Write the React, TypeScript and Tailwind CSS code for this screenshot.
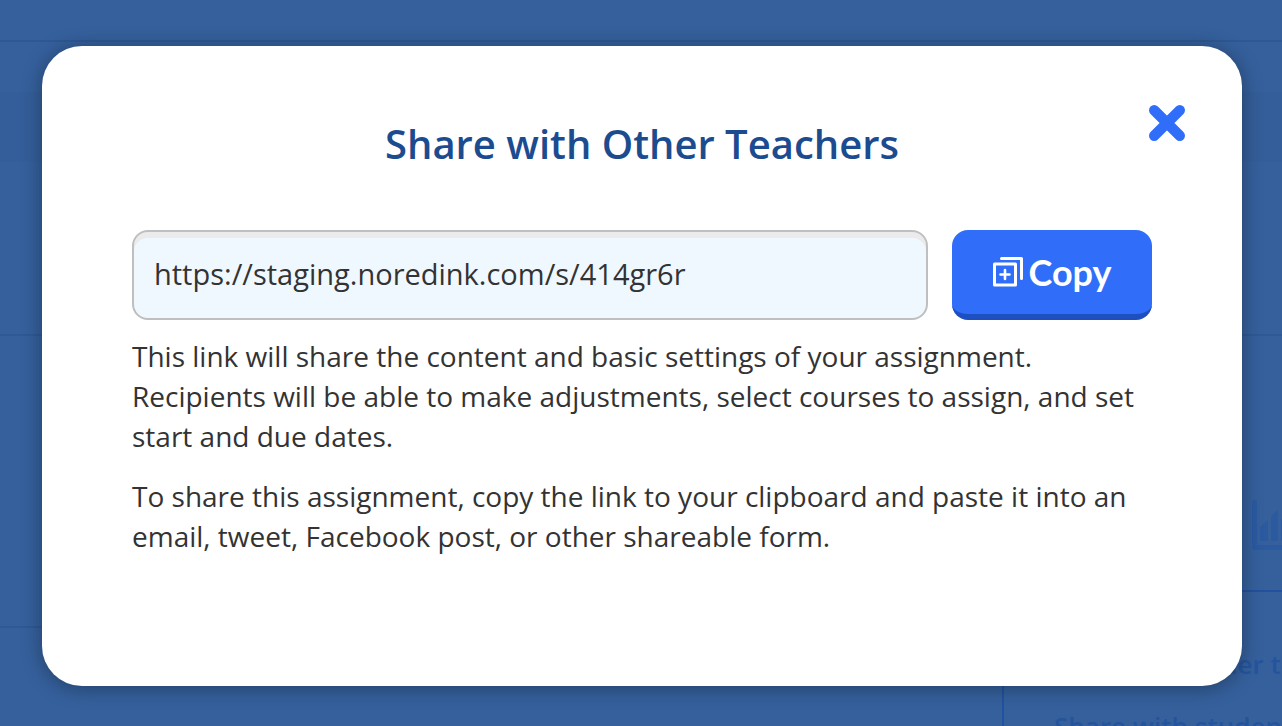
import React from "react";

function CopyIcon() {
  return (
    <svg className="size-8 shrink-0" viewBox="0 0 32 32" fill="none" stroke="currentColor" aria-hidden="true">
      <rect x="2.5" y="8" width="21" height="21" strokeWidth="3" strokeLinejoin="round" />
      <path d="M9.5 2.5H29.5V22.5" strokeWidth="3" strokeLinecap="round" strokeLinejoin="round" />
      <path d="M13 14V23M8.5 18.5H17.5" strokeWidth="2.6" strokeLinecap="round" />
    </svg>
  );
}

function CloseIcon() {
  return (
    <svg className="size-9" viewBox="0 0 36 36" fill="none" stroke="currentColor" aria-hidden="true">
      <path d="M5.2 5.2L30.8 30.8M30.8 5.2L5.2 30.8" strokeWidth="10.4" strokeLinecap="round" />
    </svg>
  );
}

function ChartIcon() {
  return (
    <svg className="h-[50px] w-14" viewBox="0 0 56 50" fill="currentColor" aria-hidden="true">
      <path d="M0 2Q0 0 2 0H3Q5 0 5 2V45H56V50H3Q0 50 0 47Z" />
      <path d="M8 27L16 20V41H8ZM19 16L26 10V41H19ZM29 20L36 14V41H29ZM39 11L46 4V41H39Z" />
    </svg>
  );
}

function AssignmentsPage() {
  return (
    <div className="absolute inset-0 overflow-hidden bg-[#35609c] text-[#24549d]" aria-hidden="true">
      <div className="h-[42px] border-b-2 border-[#2d5894]" />
      <div className="h-[294px] border-b-2 border-[#2f5994] pt-[50px]">
        <div className="h-[70px] bg-[#345e99]" />
      </div>
      <div className="flex h-[292px] justify-end border-b-2 border-[#2f5994] pt-[164px]">
        <div className="-mr-[26px] text-[#2b5aa1]">
          <ChartIcon />
        </div>
      </div>
      <div className="absolute -right-20 top-[590px] flex w-[360px] flex-col gap-[22px] border-2 border-[#2251a0] bg-[#35609c] py-[52px] pl-[50px] text-[26px] leading-10 font-semibold whitespace-nowrap">
        <span>Share with other teachers</span>
        <span>Share with students</span>
      </div>
    </div>
  );
}

export default function App() {
  return (
    <div className="relative min-h-screen overflow-hidden font-['Open_Sans','Noto_Sans',sans-serif]">
      <AssignmentsPage />
      <main className="relative px-10 pt-[46px] pb-10 pl-[42px]">
        <section
          role="dialog"
          aria-modal="true"
          aria-labelledby="share-title"
          className="relative rounded-[40px] bg-white px-[90px] pt-[70px] pb-[130px] text-[#333333] shadow-[0_2px_20px_rgba(0,0,0,0.35)]"
        >
          <button type="button" aria-label="Close" className="absolute top-[59px] right-[57px] text-[#306ef9]">
            <CloseIcon />
          </button>
          <h1 id="share-title" className="text-center text-[40px] leading-14 font-semibold text-[#1c4c8f]">
            Share with Other Teachers
          </h1>
          <div className="mt-[58px] flex gap-6">
            <input
              aria-label="Share link"
              readOnly
              defaultValue="https://staging.noredink.com/s/414gr6r"
              className="h-[90px] min-w-0 flex-1 rounded-2xl border-2 border-[#bfbfbf] bg-[#f0f8ff] px-5 pb-1 text-[29px] text-[#333333] shadow-[inset_0_6px_0_#ebebeb] outline-none"
            />
            <button
              type="button"
              className="flex h-[90px] w-[200px] items-center justify-center gap-1 rounded-2xl border-b-[6px] border-[#1e4fc0] bg-[#306ef9] font-['Lato',sans-serif] text-[36px] font-bold text-white"
            >
              <CopyIcon />
              Copy
            </button>
          </div>
          <div className="mt-4 flex flex-col gap-5 text-[28px] leading-10">
            <p>
              This link will share the content and basic settings of your assignment. Recipients will be able to make
              adjustments, select courses to assign, and set start and due dates.
            </p>
            <p>
              To share this assignment, copy the link to your clipboard and paste it into an email, tweet, Facebook
              post, or other shareable form.
            </p>
          </div>
        </section>
      </main>
    </div>
  );
}
